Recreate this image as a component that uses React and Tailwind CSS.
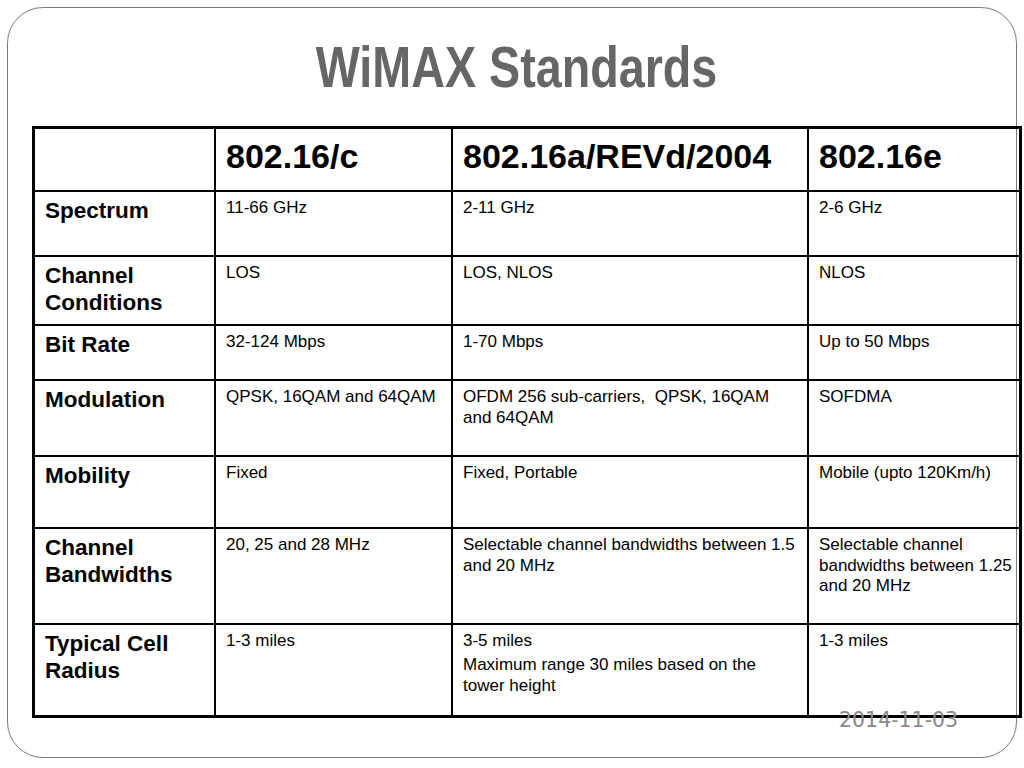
import React from "react";

const cols = ["802.16/c", "802.16a/REVd/2004", "802.16e"];

const rows = [
  { label: ["Spectrum"], h: "h-[65px]", cells: [["11-66 GHz"], ["2-11 GHz"], ["2-6 GHz"]] },
  { label: ["Channel", "Conditions"], h: "h-[69px]", cells: [["LOS"], ["LOS, NLOS"], ["NLOS"]] },
  { label: ["Bit Rate"], h: "h-[55px]", cells: [["32-124 Mbps"], ["1-70 Mbps"], ["Up to 50 Mbps"]] },
  {
    label: ["Modulation"],
    h: "h-[76px]",
    cells: [["QPSK, 16QAM and 64QAM"], ["OFDM 256 sub-carriers,\u00a0 QPSK, 16QAM", "and 64QAM"], ["SOFDMA"]],
  },
  { label: ["Mobility"], h: "h-[72px]", cells: [["Fixed"], ["Fixed, Portable"], ["Mobile (upto 120Km/h)"]] },
  {
    label: ["Channel", "Bandwidths"],
    h: "h-[96px]",
    cells: [
      ["20, 25 and 28 MHz"],
      ["Selectable channel bandwidths between 1.5", "and 20 MHz"],
      ["Selectable channel", "bandwidths between 1.25", "and 20 MHz"],
    ],
  },
];

const Lines = ({ lines }) =>
  lines.map((l, i) => (
    <React.Fragment key={i}>
      {i > 0 && <br />}
      {l}
    </React.Fragment>
  ));

export default function App() {
  return (
    <div className="w-[1024px] h-[768px] bg-white p-[7px] font-['Liberation_Sans',Arial,sans-serif]">
      <div className="relative h-[751px] border border-[#7a7a7a] rounded-[36px]">
        {/* Title (narrow bold face, squeezed from Liberation Sans) */}
        <div className="mt-[30px] pl-[8px] flex justify-center">
          <h1 className="text-[58px] leading-none font-bold text-[#676565] scale-x-[0.805] whitespace-nowrap">
            WiMAX Standards
          </h1>
        </div>

        {/* Table */}
        <div className="mt-[30px] ml-[24px] w-[990px] border-[3px] border-black grid grid-cols-[181px_237px_356px_210px] text-black">
          {/* header */}
          <div className="h-[63px] border-r-2 border-b-2 border-black" />
          {cols.map((c, i) => (
            <div
              key={c}
              className={`h-[63px] border-b-2 border-black pl-[10px] pt-[7px] text-[34px] leading-[40px] font-bold whitespace-nowrap ${
                i < 2 ? "border-r-2" : ""
              }`}
            >
              {c}
            </div>
          ))}

          {rows.map((r) => (
            <React.Fragment key={r.label.join(" ")}>
              <div className={`${r.h} border-r-2 border-b-2 border-black pl-[10px] pt-[5px] text-[22.5px] leading-[27px] font-bold whitespace-nowrap`}>
                <Lines lines={r.label} />
              </div>
              {r.cells.map((c, i) => (
                <div
                  key={i}
                  className={`${r.h} border-b-2 border-black pl-[10px] pt-[6px] text-[17px] leading-[20.5px] whitespace-nowrap ${
                    i < 2 ? "border-r-2" : ""
                  }`}
                >
                  <Lines lines={c} />
                </div>
              ))}
            </React.Fragment>
          ))}

          {/* last row */}
          <div className="h-[90px] border-r-2 border-black pl-[10px] pt-[5px] text-[22.5px] leading-[27px] font-bold whitespace-nowrap">
            Typical Cell
            <br />
            Radius
          </div>
          <div className="h-[90px] border-r-2 border-black pl-[10px] pt-[6px] text-[17px] leading-[20.5px]">1-3 miles</div>
          <div className="h-[90px] border-r-2 border-black pl-[10px] pt-[6px] text-[17px] leading-[20.5px] whitespace-nowrap">
            <p>3-5 miles</p>
            <p className="mt-[3.5px]">
              Maximum range 30 miles based on the
              <br />
              tower height
            </p>
          </div>
          <div className="h-[90px] pl-[10px] pt-[6px] text-[17px] leading-[20.5px]">1-3 miles</div>
        </div>

        {/* Date footer, lies over the table's bottom edge */}
        <div className="absolute left-[831px] top-[702px] text-[20.5px] leading-none text-[#8a8a8a] font-['DejaVu_Sans',sans-serif]">
          2014-11-03
        </div>
      </div>
    </div>
  );
}
